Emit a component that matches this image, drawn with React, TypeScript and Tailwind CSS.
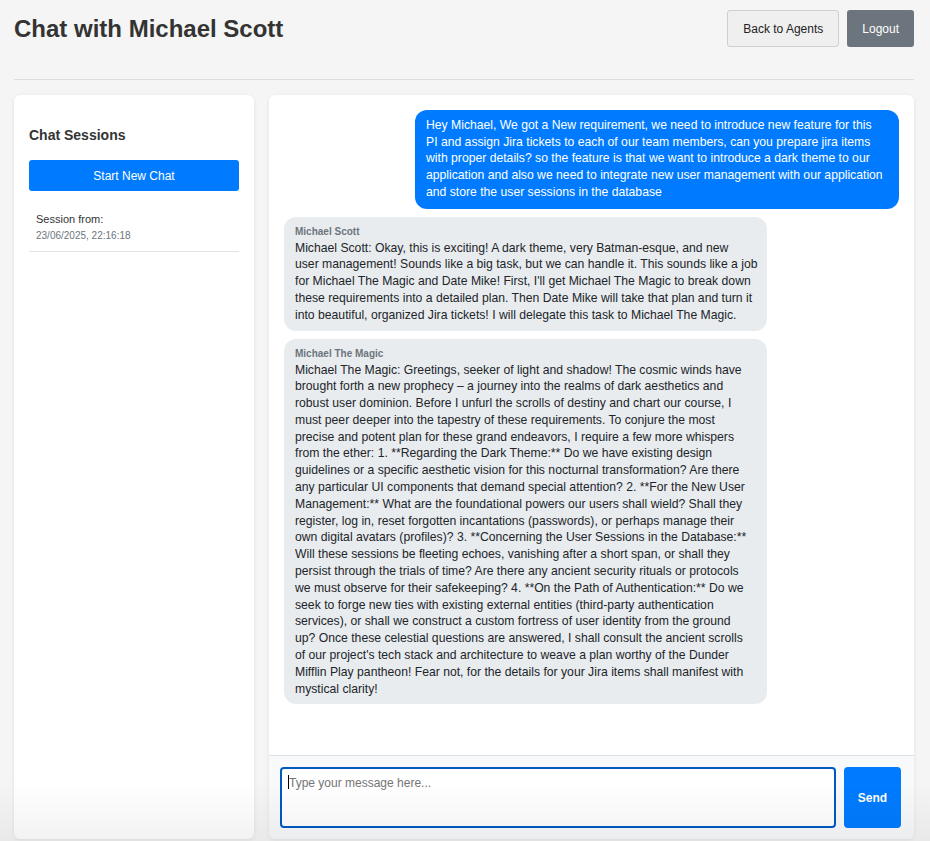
import React from 'react';

type Message = { role: 'user' | 'agent'; name?: string; text?: string; lines?: string[] };

const messages: Message[] = [
  {
    role: 'user',
    text: 'Hey Michael, We got a New requirement, we need to introduce new feature for this PI and assign Jira tickets to each of our team members, can you prepare jira items with proper details? so the feature is that we want to introduce a dark theme to our application and also we need to integrate new user management with our application and store the user sessions in the database',
  },
  {
    role: 'agent',
    name: 'Michael Scott',
    lines: [
      'Michael Scott: Okay, this is exciting! A dark theme, very Batman-esque, and new',
      'user management! Sounds like a big task, but we can handle it. This sounds like a job',
      "for Michael The Magic and Date Mike! First, I'll get Michael The Magic to break down",
      'these requirements into a detailed plan. Then Date Mike will take that plan and turn it',
      'into beautiful, organized Jira tickets! I will delegate this task to Michael The Magic.',
    ],
  },
  {
    role: 'agent',
    name: 'Michael The Magic',
    text: "Michael The Magic: Greetings, seeker of light and shadow! The cosmic winds have brought forth a new prophecy – a journey into the realms of dark aesthetics and robust user dominion. Before I unfurl the scrolls of destiny and chart our course, I must peer deeper into the tapestry of these requirements. To conjure the most precise and potent plan for these grand endeavors, I require a few more whispers from the ether: 1. **Regarding the Dark Theme:** Do we have existing design guidelines or a specific aesthetic vision for this nocturnal transformation? Are there any particular UI components that demand special attention? 2. **For the New User Management:** What are the foundational powers our users shall wield? Shall they register, log in, reset forgotten incantations (passwords), or perhaps manage their own digital avatars (profiles)? 3. **Concerning the User Sessions in the Database:** Will these sessions be fleeting echoes, vanishing after a short span, or shall they persist through the trials of time? Are there any ancient security rituals or protocols we must observe for their safekeeping? 4. **On the Path of Authentication:** Do we seek to forge new ties with existing external entities (third-party authentication services), or shall we construct a custom fortress of user identity from the ground up? Once these celestial questions are answered, I shall consult the ancient scrolls of our project's tech stack and architecture to weave a plan worthy of the Dunder Mifflin Play pantheon! Fear not, for the details for your Jira items shall manifest with mystical clarity!",
  },
];

const App = () => {
  return (
    <div
      className="relative min-h-[841px] bg-[#f4f5f4] pl-[14px] pr-[16px] text-[#212529]"
      style={{ fontFamily: '"Liberation Sans", Arial, sans-serif' }}
    >
      <header className="flex items-center justify-between pt-[10px] pb-[32px] border-b border-[#dcdedd]">
        <h1 className="text-[24px] font-bold leading-[37px] text-[#333]">Chat with Michael Scott</h1>
        <div className="flex gap-[8px]">
          <button className="h-[37px] px-[15px] text-[12px] text-[#222] bg-[#efefef] border border-[#cfcfcf] rounded-[3px]">
            Back to Agents
          </button>
          <button className="h-[37px] px-[15px] text-[12px] text-white bg-[#6c757d] rounded-[3px]">
            Logout
          </button>
        </div>
      </header>

      <div className="mt-[15px] flex gap-[15px]">
        <aside className="w-[240px] h-[744px] bg-white rounded-[6px] shadow-[0_1px_4px_rgba(0,0,0,0.08)] px-[15px] pt-[30px]">
          <h3 className="text-[14px] font-bold leading-[20px] text-[#333]">Chat Sessions</h3>
          <button className="mt-[15px] w-full h-[31px] bg-[#007bff] text-white text-[12px] rounded-[3px]">
            Start New Chat
          </button>
          <div className="mt-[10px] px-[7px] pt-[11px] pb-[8px] border-b border-[#e3e3e3]">
            <div className="text-[11px] leading-[14px] text-[#333]">Session from:</div>
            <div className="mt-[3px] text-[10px] leading-[14px] text-[#6c757d]">23/06/2025, 22:16:18</div>
          </div>
        </aside>

        <section className="flex-1 h-[744px] bg-white rounded-[6px] shadow-[0_1px_4px_rgba(0,0,0,0.08)] flex flex-col overflow-hidden">
          <div className="flex-1 px-[15px] pt-[15px] flex flex-col gap-[8px]">
            {messages.map((m, i) =>
              m.role === 'user' ? (
                <div
                  key={i}
                  className="self-end w-[484px] bg-[#007bff] text-white text-[12.2px] leading-[16.7px] pl-[11px] pr-[15px] pt-[7px] pb-[8px] rounded-[12px]"
                >
                  {m.text}
                </div>
              ) : (
                <div
                  key={i}
                  className="self-start w-[483px] bg-[#e9ecef] text-[#212529] text-[12.2px] leading-[16.8px] pl-[11px] pr-[16px] pt-[8px] pb-[7px] rounded-[12px]"
                >
                  <div className="text-[10px] font-bold leading-[13px] mb-[2px] text-[#6c757d]">{m.name}</div>
                  {m.lines
                    ? m.lines.map((line, j) => (
                        <div key={j} className="whitespace-nowrap">
                          {line}
                        </div>
                      ))
                    : m.text}
                </div>
              )
            )}
          </div>
          <div className="border-t border-[#dee2e6] bg-[#f8f9fa] pl-[11px] pr-[13px] py-[11px] flex gap-[8px]">
            <div className="relative flex-1">
              <textarea
                className="block w-full h-[61px] resize-none border-2 border-[#0059c1] rounded-[4px] bg-white px-[7px] py-[6px] text-[12px] leading-[16px] outline-none placeholder:text-[#757575]"
                placeholder="Type your message here..."
              />
              <span className="absolute left-[8px] top-[8px] w-px h-[14px] bg-black" />
            </div>
            <button className="w-[57px] h-[61px] bg-[#007bff] text-white text-[12px] font-semibold rounded-[4px]">
              Send
            </button>
          </div>
        </section>
      </div>

      <div className="pointer-events-none absolute left-0 right-0 bottom-0 h-[60px] bg-gradient-to-b from-transparent to-black/[0.05]" />
    </div>
  );
};

export default App;
